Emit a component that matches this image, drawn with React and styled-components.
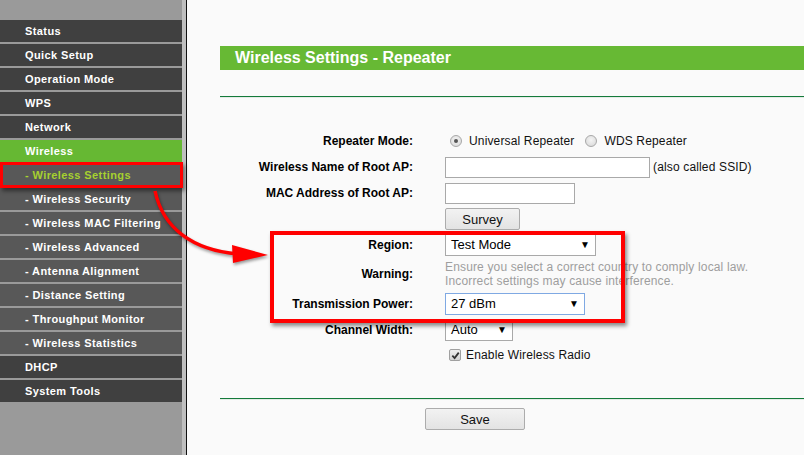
import styled, { createGlobalStyle, css } from "styled-components";

const GlobalStyle = createGlobalStyle`
  html, body {
    margin: 0;
    padding: 0;
    background: #fafafa;
    font-family: Arial, "Liberation Sans", sans-serif;
  }
`;

const menu = [
  { label: "Status" },
  { label: "Quick Setup" },
  { label: "Operation Mode" },
  { label: "WPS" },
  { label: "Network" },
  { label: "Wireless", active: true },
  { label: "- Wireless Settings", sub: true, selected: true },
  { label: "- Wireless Security", sub: true },
  { label: "- Wireless MAC Filtering", sub: true },
  { label: "- Wireless Advanced", sub: true },
  { label: "- Antenna Alignment", sub: true },
  { label: "- Distance Setting", sub: true },
  { label: "- Throughput Monitor", sub: true },
  { label: "- Wireless Statistics", sub: true },
  { label: "DHCP" },
  { label: "System Tools" },
];

function App() {
  return (
    <Page>
      <GlobalStyle />
      <Sidebar>
        {menu.map((item) => (
          <MenuItem
            key={item.label}
            $sub={item.sub}
            $active={item.active}
            $selected={item.selected}
          >
            {item.label}
          </MenuItem>
        ))}
      </Sidebar>
      <SideEdge />

      <Main>
        <TitleBar>Wireless Settings - Repeater</TitleBar>
        <Rule />
        <Form>
          <Label>Repeater Mode:</Label>
          <Field>
            <Radio $checked />
            <span>Universal Repeater</span>
            <Radio $gap />
            <span>WDS Repeater</span>
          </Field>

          <Label>Wireless Name of Root AP:</Label>
          <Field>
            <TextBox $width={205} />
            <Hint>(also called SSID)</Hint>
          </Field>

          <Label>MAC Address of Root AP:</Label>
          <Field>
            <TextBox $width={130} />
          </Field>

          <Label />
          <Field>
            <Button $width={75}>Survey</Button>
          </Field>

          <Label>Region:</Label>
          <Field>
            <Select $width={151}>
              Test Mode<Arrow>▼</Arrow>
            </Select>
          </Field>

          <Label>Warning:</Label>
          <Field>
            <Warning>
              Ensure you select a correct country to comply local law.
              <br />
              Incorrect settings may cause interference.
            </Warning>
          </Field>

          <Label>Transmission Power:</Label>
          <Field>
            <Select $width={140} $focused>
              27 dBm<Arrow>▼</Arrow>
            </Select>
          </Field>

          <Label>Channel Width:</Label>
          <Field>
            <Select $width={68}>
              Auto<Arrow>▼</Arrow>
            </Select>
          </Field>

          <Label />
          <Field>
            <Check>
              <svg width="9" height="9" viewBox="0 0 10 10">
                <path d="M1.5 5.2 L4 7.8 L8.6 1.8" fill="none" stroke="#333" strokeWidth="2" />
              </svg>
            </Check>
            <span>Enable Wireless Radio</span>
          </Field>
        </Form>
        <Rule $top={31} />
        <Footer>
          <Button $width={100}>Save</Button>
        </Footer>
      </Main>

      <Highlight $left={0} $top={162} $width={183} $height={26} $border={3} />
      <Highlight $left={270} $top={231} $width={355} $height={92} $border={4} />
      <Pointer width="300" height="300" viewBox="0 0 300 300">
        <path
          d="M155 191 C 163 228, 192 250, 238 254"
          fill="none"
          stroke="#f00"
          strokeWidth="3.5"
        />
        <polygon points="232,245 268,255 233,263" fill="#f00" />
      </Pointer>
    </Page>
  );
}

export default App;

const Page = styled.div`
  position: relative;
  display: flex;
  height: 455px;
  overflow: hidden;
  background: #fafafa;
`;

const Sidebar = styled.nav`
  width: 182px;
  flex-shrink: 0;
  background: #9a9a9a;
  padding-top: 20px;
  display: flex;
  flex-direction: column;
  gap: 2px;
`;

const MenuItem = styled.div`
  height: 22px;
  line-height: 22px;
  padding-left: 25px;
  font-size: 11px;
  letter-spacing: 0.4px;
  font-weight: bold;
  color: #fff;
  background: #404040;
  white-space: nowrap;
  ${(p) =>
    p.$sub &&
    css`
      background: #585858;
    `}
  ${(p) =>
    p.$active &&
    css`
      background: #66b833;
    `}
  ${(p) =>
    p.$selected &&
    css`
      color: #a6d12f;
    `}
`;

const SideEdge = styled.div`
  width: 4px;
  flex-shrink: 0;
  background: #bfbfbf;
  border-right: 1px solid #111;
`;

const Main = styled.main`
  flex: 1;
  padding: 46px 0 0 33px;
  color: #000;
`;

const TitleBar = styled.h1`
  margin: 0;
  height: 24px;
  line-height: 24px;
  padding-left: 15px;
  background: #67b934;
  color: #fff;
  font-size: 16px;
  font-weight: bold;
`;

const Rule = styled.div`
  margin-top: ${(p) => p.$top ?? 26}px;
  height: 1px;
  background: #147a3a;
  border-bottom: 1px solid #e4ece6;
`;

const Form = styled.div`
  margin-top: 30px;
  display: grid;
  grid-template-columns: 193px auto;
  grid-template-rows: 26px 26px 26px 26px 26px 32px 27px 26px 24px;
  column-gap: 32px;
  font-size: 12px;
`;

const Label = styled.div`
  display: flex;
  align-items: center;
  justify-content: flex-end;
  font-weight: bold;
  white-space: nowrap;
`;

const Field = styled.div`
  display: flex;
  align-items: center;
  white-space: nowrap;
  letter-spacing: 0.15px;
  color: #111;
`;

const Radio = styled.span`
  box-sizing: border-box;
  width: 12px;
  height: 12px;
  border-radius: 50%;
  border: 1px solid #a8a8a8;
  background: radial-gradient(circle at 50% 40%, #f4f4f4, #d6d6d6);
  margin: 0 7px 0 ${(p) => (p.$gap ? 11 : 5)}px;
  position: relative;
  ${(p) =>
    p.$checked &&
    css`
      &::after {
        content: "";
        position: absolute;
        left: 3px;
        top: 3px;
        width: 4px;
        height: 4px;
        border-radius: 50%;
        background: #555;
      }
    `}
`;

const TextBox = styled.div`
  box-sizing: border-box;
  width: ${(p) => p.$width}px;
  height: 21px;
  border: 1px solid #a9a9a9;
  background: #fff;
`;

const Hint = styled.span`
  margin-left: 3px;
`;

const Button = styled.div`
  box-sizing: border-box;
  width: ${(p) => p.$width}px;
  height: 22px;
  border: 1px solid #acacac;
  border-radius: 2px;
  background: linear-gradient(#f2f2f2, #e3e3e3);
  font-size: 13px;
  letter-spacing: 0;
  color: #111;
  display: flex;
  align-items: center;
  justify-content: center;
`;

const Select = styled.div`
  box-sizing: border-box;
  position: relative;
  width: ${(p) => p.$width}px;
  height: 22px;
  line-height: 20px;
  padding-left: 5px;
  border: 1px solid ${(p) => (p.$focused ? "#7fa9e3" : "#a9a9a9")};
  background: #fff;
  font-size: 13px;
  letter-spacing: 0;
  color: #000;
`;

const Arrow = styled.span`
  position: absolute;
  right: 5px;
  top: 0;
  font-size: 10px;
  color: #000;
`;

const Warning = styled.div`
  color: #9e9e9e;
  line-height: 14px;
`;

const Check = styled.span`
  box-sizing: border-box;
  width: 12px;
  height: 12px;
  margin: 0 5px 0 4px;
  border: 1px solid #a0a0a0;
  border-radius: 2px;
  background: linear-gradient(#efefef, #d4d4d4);
  display: flex;
  align-items: center;
  justify-content: center;
`;

const Footer = styled.div`
  padding: 8px 0 0 205px;
`;

const Highlight = styled.div`
  position: absolute;
  box-sizing: border-box;
  left: ${(p) => p.$left}px;
  top: ${(p) => p.$top}px;
  width: ${(p) => p.$width}px;
  height: ${(p) => p.$height}px;
  border: ${(p) => p.$border}px solid #f00;
  box-shadow: 2px 3px 4px rgba(0, 0, 0, 0.45);
  pointer-events: none;
`;

const Pointer = styled.svg`
  position: absolute;
  left: 0;
  top: 0;
  pointer-events: none;
  filter: drop-shadow(1px 2px 1.5px rgba(0, 0, 0, 0.4));
`;
